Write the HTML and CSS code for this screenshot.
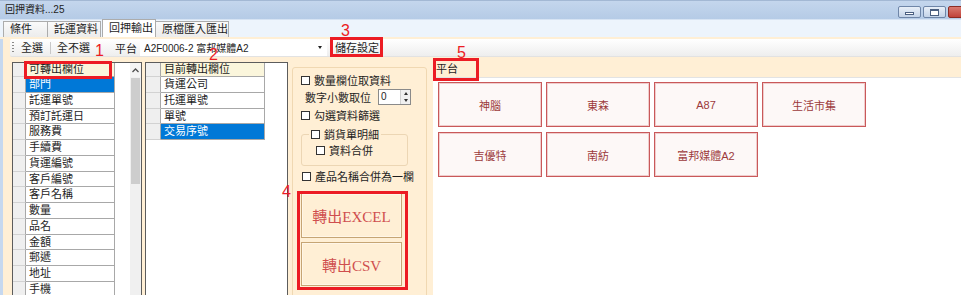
FILE: index.html
```html
<!DOCTYPE html>
<html lang="zh-Hant">
<head>
    <meta charset="UTF-8">
    <title>回押資料...25</title>
    <link rel="stylesheet" href="styles.css">
</head>
<body>
    <div class="window">
        <div class="titlebar">
            <span class="title">回押資料...25</span>
            <div class="winbtns">
                <div class="wbtn"><span class="ico-min"></span></div>
                <div class="wbtn"><span class="ico-max"></span></div>
                <div class="wbtn close"></div>
            </div>
        </div>

        <div class="tabstrip">
            <div class="tab" style="width:45px">條件</div>
            <div class="tab" style="width:53px">託運資料</div>
            <div class="tab active" style="width:54px">回押輸出</div>
            <div class="tab" style="width:73px">原檔匯入匯出</div>
        </div>

        <div class="tabpage">
            <div class="toolbar">
                <span class="grip"></span>
                <span class="tb-btn first">全選</span>
                <span class="tb-sep"></span>
                <span class="tb-btn">全不選</span>
                <span class="tb-label">平台</span>
                <div class="combo">
                    <span>A2F0006-2 富邦媒體A2</span>
                    <span class="combo-arrow"></span>
                </div>
                <span class="tb-btn save">儲存設定</span>
            </div>

            <div class="content">
                <div class="grid grid-src">
                    <div class="rows">
                        <div class="row hdr"><div class="rh"></div><div class="cell">可轉出欄位</div></div>
                        <div class="row sel"><div class="rh"></div><div class="cell">部門</div></div>
                        <div class="row"><div class="rh"></div><div class="cell">託運單號</div></div>
                        <div class="row"><div class="rh"></div><div class="cell">預訂託運日</div></div>
                        <div class="row"><div class="rh"></div><div class="cell">服務費</div></div>
                        <div class="row"><div class="rh"></div><div class="cell">手續費</div></div>
                        <div class="row"><div class="rh"></div><div class="cell">貨運編號</div></div>
                        <div class="row"><div class="rh"></div><div class="cell">客戶編號</div></div>
                        <div class="row"><div class="rh"></div><div class="cell">客戶名稱</div></div>
                        <div class="row"><div class="rh"></div><div class="cell">數量</div></div>
                        <div class="row"><div class="rh"></div><div class="cell">品名</div></div>
                        <div class="row"><div class="rh"></div><div class="cell">金額</div></div>
                        <div class="row"><div class="rh"></div><div class="cell">郵遞</div></div>
                        <div class="row"><div class="rh"></div><div class="cell">地址</div></div>
                        <div class="row"><div class="rh"></div><div class="cell">手機</div></div>
                    </div>
                    <div class="scrollbar">
                        <div class="sb-up">
                            <svg width="7" height="5" viewBox="0 0 7 5"><polyline points="0.5,4 3.5,1 6.5,4" fill="none" stroke="#505050" stroke-width="1.3"/></svg>
                        </div>
                        <div class="sb-thumb"></div>
                    </div>
                </div>

                <div class="grid grid-dst">
                    <div class="rows">
                        <div class="row hdr"><div class="rh"></div><div class="cell">目前轉出欄位</div></div>
                        <div class="row"><div class="rh"></div><div class="cell">貨運公司</div></div>
                        <div class="row"><div class="rh"></div><div class="cell">托運單號</div></div>
                        <div class="row"><div class="rh"></div><div class="cell">單號</div></div>
                        <div class="row sel"><div class="rh"></div><div class="cell">交易序號</div></div>
                    </div>
                </div>

                <div class="options">
                    <div class="group">
                        <label class="chk row1"><span class="box"></span>數量欄位取資料</label>
                        <div class="num-row">
                            <span>數字小數取位</span>
                            <div class="numeric">
                                <span class="num-val">0</span>
                                <span class="spin">
                                    <span class="spin-up"></span>
                                    <span class="spin-down"></span>
                                </span>
                            </div>
                        </div>
                        <label class="chk row3"><span class="box"></span>勾選資料篩選</label>
                        <fieldset class="subgroup">
                            <legend><label class="chk"><span class="box"></span>銷貨單明細</label></legend>
                            <label class="chk"><span class="box"></span>資料合併</label>
                        </fieldset>
                        <label class="chk row5"><span class="box"></span>產品名稱合併為一欄</label>
                        <div class="btn-out excel">轉出EXCEL</div>
                        <div class="btn-out csv">轉出CSV</div>
                    </div>
                </div>

                <div class="platforms">
                    <div class="plat-hdr">平台</div>
                    <div class="plat-body">
                        <div class="plat-btn">神腦</div>
                        <div class="plat-btn">東森</div>
                        <div class="plat-btn">A87</div>
                        <div class="plat-btn">生活市集</div>
                        <div class="plat-btn">吉優特</div>
                        <div class="plat-btn">南紡</div>
                        <div class="plat-btn">富邦媒體A2</div>
                    </div>
                </div>
            </div>
        </div>

        <!-- annotation marks drawn over the screenshot -->
        <div class="mark-box" style="left:24px;top:61px;width:88px;height:18px"></div>
        <div class="mark-box" style="left:330px;top:37px;width:53px;height:20px"></div>
        <div class="mark-box" style="left:433px;top:58px;width:46px;height:23px"></div>
        <div class="mark-box" style="left:297px;top:191px;width:111px;height:99px"></div>
        <div class="mark-num" style="left:95px;top:43px">1</div>
        <div class="mark-num" style="left:209px;top:47px">2</div>
        <div class="mark-num" style="left:341px;top:23px">3</div>
        <div class="mark-num" style="left:282px;top:184px">4</div>
        <div class="mark-num" style="left:457px;top:45px">5</div>
    </div>
</body>
</html>
```

FILE: styles.css
```css
* {
    margin: 0;
    padding: 0;
    box-sizing: border-box;
}

body {
    width: 961px;
    height: 295px;
    overflow: hidden;
    font-family: "Liberation Sans", "Noto Sans CJK TC", sans-serif;
    font-size: 11px;
    color: #1e1e1e;
    background: #ffefd5;
}

.window {
    position: relative;
    height: 295px;
    overflow: hidden;
}

/* title bar */
.titlebar {
    height: 19px;
    display: flex;
    justify-content: space-between;
    background: linear-gradient(#c4d6ed, #b5cbe6);
    border-top: 1px solid #a3b8d4;
    padding-left: 5px;
}

.title {
    font-size: 10px;
    line-height: 18px;
    color: #222;
}

.winbtns {
    display: flex;
    gap: 2px;
    margin-top: 5px;
    margin-right: -2px;
}

.wbtn {
    width: 23px;
    height: 12px;
    border: 1px solid #6f86a8;
    border-radius: 2px;
    background: linear-gradient(#e8eff8, #c3d3e8);
    display: flex;
    align-items: center;
    justify-content: center;
}

.wbtn.close {
    width: 15px;
    background: linear-gradient(#d9796f, #c0433a);
    border-color: #8b2c24;
}

.ico-min {
    width: 9px;
    height: 3px;
    background: #fff;
    border: 1px solid #4a5f80;
    margin-top: 2px;
}

.ico-max {
    width: 9px;
    height: 7px;
    border: 1px solid #4a5f80;
    border-top-width: 2px;
    background: #fff;
}

/* tabs */
.tabstrip {
    height: 18px;
    display: flex;
    align-items: flex-end;
    padding-left: 3px;
    background: #edf4fc;
    border-top: 1px solid #d6e3f3;
}

.tab {
    height: 16px;
    padding-left: 6px;
    border: 1px solid #acacac;
    border-bottom: none;
    border-left: none;
    background: linear-gradient(#fafafa, #ececec);
    font-size: 11px;
    line-height: 15px;
    white-space: nowrap;
    overflow: hidden;
}

.tab:first-child {
    border-left: 1px solid #acacac;
}

.tab.active {
    height: 18px;
    background: #fff;
    border-left: 1px solid #acacac;
    margin-left: 1px;
    line-height: 17px;
}

/* tab page */
.tabpage {
    height: 258px;
    border-left: 3px solid #c6d8ef;
}

.toolbar {
    height: 18px;
    margin: 2px 0 0 7px;
    display: flex;
    align-items: center;
    background: linear-gradient(#ffffff, #eeeeee);
    border-bottom: 1px solid #e2e2e2;
    border-radius: 2px 0 0 2px;
}

.grip {
    width: 2px;
    height: 12px;
    margin-left: 2px;
    background: repeating-linear-gradient(#8a8a8a 0 1px, transparent 1px 3px);
}

.tb-btn {
    line-height: 16px;
    white-space: nowrap;
}

.tb-btn.first {
    margin-left: 7px;
}

.tb-sep {
    width: 1px;
    height: 12px;
    margin: 0 6px 0 7px;
    background: #c8c8c8;
}

.tb-label {
    margin-left: 25px;
}

.combo {
    width: 187px;
    height: 16px;
    margin-left: 3px;
    background: #fff;
    display: flex;
    align-items: center;
    justify-content: space-between;
    padding: 0 5px 0 4px;
    font-size: 10px;
}

.combo-arrow {
    width: 0;
    height: 0;
    border-left: 2.5px solid transparent;
    border-right: 2.5px solid transparent;
    border-top: 3px solid #222;
}

.tb-btn.save {
    margin-left: 8px;
}

/* main area */
.content {
    display: flex;
    height: 238px;
}

.grid {
    display: flex;
    background: #fff;
    border: 1px solid #5c5c5c;
    margin-top: 5px;
    height: 250px;
}

.grid-src {
    width: 130px;
    margin-left: 9px;
}

.grid-dst {
    width: 143px;
    margin-left: 3px;
}

.rows {
    display: flex;
    flex-direction: column;
}

.row {
    display: flex;
    height: 15.75px;
}

.row.hdr {
    height: 14px;
}

.rh {
    width: 13px;
    background: #efefef;
    border-right: 1px solid #a8a8a8;
    border-bottom: 1px solid #d2d2d2;
}

.grid-dst .rh {
    width: 15px;
}

.cell {
    width: 89px;
    padding-left: 3px;
    border-right: 1px solid #a8a8a8;
    border-bottom: 1px solid #a8a8a8;
    line-height: 14px;
    white-space: nowrap;
}

.grid-dst .cell {
    width: 104px;
}

.hdr .cell {
    background: #fbf6dc;
    line-height: 13px;
}

.sel .cell {
    background: #0078d7;
    color: #fff;
}

.scrollbar {
    width: 11px;
    margin-left: auto;
    background: #f0f0f0;
    display: flex;
    flex-direction: column;
}

.sb-up {
    height: 14px;
    display: flex;
    align-items: center;
    justify-content: center;
    background: #f4f4f4;
}

.sb-thumb {
    height: 106px;
    margin: 1px 1px 0;
    background: #cdcdcd;
}

/* options column */
.options {
    width: 145px;
    padding: 10px 0 0 4px;
}

.group {
    width: 135px;
    height: 240px;
    border: 1px solid #f0d8b2;
    border-radius: 3px;
    padding-left: 8px;
    display: flex;
    flex-direction: column;
    align-items: flex-start;
}

.chk {
    display: flex;
    align-items: center;
    gap: 4px;
    height: 16px;
    white-space: nowrap;
}

.box {
    width: 9px;
    height: 9px;
    border: 1px solid #333;
    background: #fff;
}

.row1 {
    margin-top: 4px;
}

.num-row {
    display: flex;
    align-items: center;
    height: 17px;
    margin-left: 4px;
}

.numeric {
    width: 33px;
    height: 16px;
    margin-left: 7px;
    background: #fff;
    border: 1px solid #8a8a8a;
    display: flex;
    justify-content: space-between;
}

.num-val {
    padding-left: 2px;
    line-height: 14px;
    font-size: 10px;
}

.spin {
    width: 10px;
    display: flex;
    flex-direction: column;
    border-left: 1px solid #d0d0d0;
    background: #f0f0f0;
}

.spin-up, .spin-down {
    flex: 1;
    display: flex;
    align-items: center;
    justify-content: center;
}

.spin-up::after {
    content: "";
    border-left: 2.5px solid transparent;
    border-right: 2.5px solid transparent;
    border-bottom: 3px solid #333;
}

.spin-down::after {
    content: "";
    border-left: 2.5px solid transparent;
    border-right: 2.5px solid transparent;
    border-top: 3px solid #333;
}

.row3 {
    margin-top: 2px;
}

.subgroup {
    width: 107px;
    margin-top: 3px;
    border: 1px solid #ecd6b4;
    border-radius: 3px;
    padding: 0 0 7px 14px;
}

.subgroup legend {
    margin-left: -7px;
    padding: 0 2px;
}

.row5 {
    margin-top: 2px;
    margin-left: 1px;
}

.btn-out {
    width: 101px;
    display: flex;
    align-items: center;
    justify-content: center;
    background: #ffefd5;
    border: 1px solid #c6a574;
    box-shadow: inset 0 0 0 1px #fff6e8;
    font-family: "Liberation Serif", "Noto Sans CJK TC", serif;
    font-size: 15px;
    color: #cf4e4e;
}

.btn-out.excel {
    height: 45px;
    margin-top: 9px;
}

.btn-out.csv {
    height: 44px;
    margin-top: 4px;
}

/* platforms */
.platforms {
    flex: 1;
    display: flex;
    flex-direction: column;
}

.plat-hdr {
    height: 21px;
    padding: 5px 0 0 3px;
    line-height: 14px;
    border-bottom: 1px solid #e3e3e3;
}

.plat-body {
    flex: 1;
    background: #fff;
    padding: 4px 0 0 5px;
    display: grid;
    grid-template-columns: repeat(4, 104px);
    grid-auto-rows: 45px;
    gap: 5px 4px;
    align-content: start;
}

.plat-btn {
    display: flex;
    align-items: center;
    justify-content: center;
    background: #fdf8f7;
    border: 1px solid #c9595a;
    box-shadow: inset 0 0 0 1px #f0cccc;
    color: #9c3a3b;
    font-size: 11px;
}

/* red annotation marks */
.mark-box {
    position: absolute;
    border: 3px solid #ec1c24;
}

.mark-num {
    position: absolute;
    font-family: "Liberation Sans", sans-serif;
    font-size: 16px;
    line-height: 16px;
    color: #ec1c24;
}
```
